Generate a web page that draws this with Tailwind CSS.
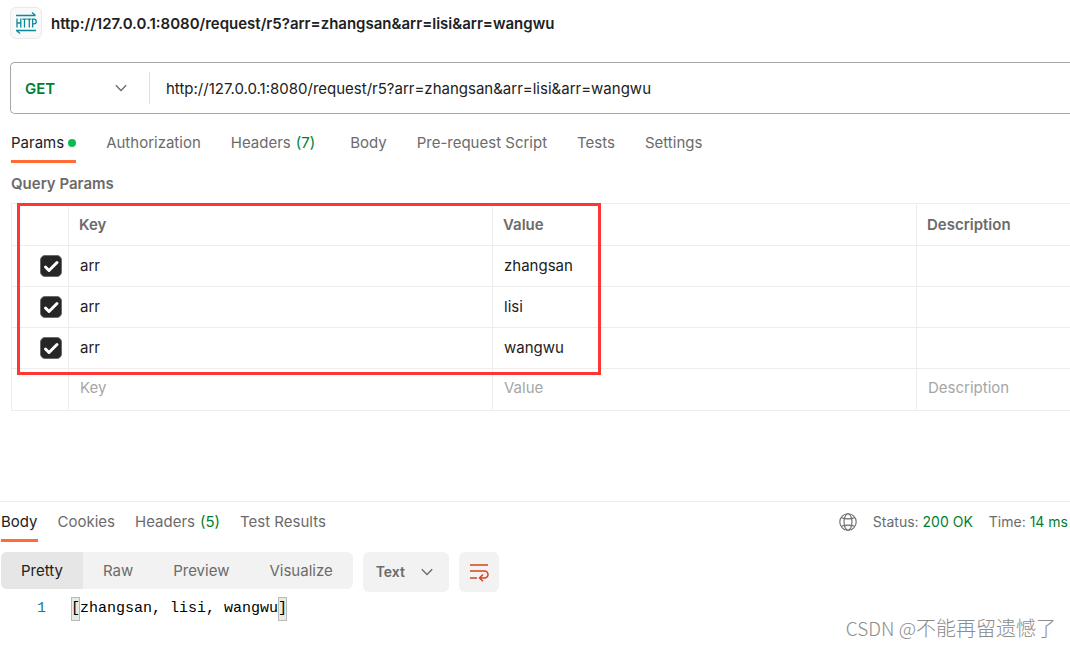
<!DOCTYPE html>
<html lang="en">
<head>
<meta charset="utf-8">
<meta name="viewport" content="width=device-width, initial-scale=1">
<title>API request</title>
<script src="https://cdn.jsdelivr.net/npm/@tailwindcss/browser@4"></script>
</head>
<body class="relative min-h-screen overflow-x-hidden bg-white font-['Inter','Liberation_Sans',sans-serif] text-[15px] leading-5 text-[#6b6b6b]">

<header class="flex items-center gap-[9px] pt-[7px] pl-[10px]">
  <span class="flex size-8 items-center justify-center rounded-md border border-[#e9e9e9] bg-[#f9f9f9]">
    <svg class="size-6" viewBox="0 0 24 24" fill="none" stroke="#0b8a99" stroke-width="1.3" aria-hidden="true">
      <path d="M2 4.500h19.500M18 1.500l3.500 3M2 19.500h20M2.500 19.500l3.500 3"/>
      <path d="M3 7.500v9M6.800 7.500v9M3 12h3.800M8.300 8.200h4.400M10.500 8.200v8.300M13.200 8.200h4.200M15.300 8.200v8.300M18.600 16.500v-8.300h1.400a2.100 2.100 0 0 1 0 4.600h-1.400"/>
    </svg>
  </span>
  <h1 class="pt-px font-semibold text-[#212121]">http://127.0.0.1:8080/request/r5?arr=zhangsan&amp;arr=lisi&amp;arr=wangwu</h1>
</header>

<main>
  <form class="mt-[23px] ml-[10px] flex h-[52px] items-center rounded-l-[5px] border border-r-0 border-[#a6a6a6]">
    <div class="relative flex h-8 w-[139px] items-center border-r border-[#e1e1e1]">
      <select aria-label="Method" class="h-full w-full appearance-none bg-transparent pt-px pl-[14px] font-semibold text-[#007f31] outline-none"><option>GET</option></select>
      <svg class="pointer-events-none absolute right-[22px] size-3" viewBox="0 0 12 12" fill="none" stroke="#6b6b6b" stroke-width="1.3" aria-hidden="true"><path d="M.8 3.300 6 8.500l5.200-5.200"/></svg>
    </div>
    <input aria-label="Request URL" class="h-full min-w-0 flex-1 pl-4 text-[#212121] outline-none" value="http://127.0.0.1:8080/request/r5?arr=zhangsan&amp;arr=lisi&amp;arr=wangwu">
  </form>

  <nav class="mt-4 ml-[11px] flex gap-[30px]" aria-label="Request sections">
    <button class="flex h-[33px] items-start border-b-3 border-[#ff6c37] pt-[3px] text-[#212121]"><span>Params</span><span class="mt-[6px] ml-1 size-2 rounded-full bg-[#0cbb52]"></span></button>
    <button class="flex h-[33px] items-start pt-[3px]">Authorization</button>
    <button class="mr-[5px] flex h-[33px] items-start gap-[5px] pt-[3px]">Headers <span class="text-[#007f31]">(7)</span></button>
    <button class="flex h-[33px] items-start pt-[3px]">Body</button>
    <button class="flex h-[33px] items-start pt-[3px]">Pre-request Script</button>
    <button class="flex h-[33px] items-start pt-[3px]">Tests</button>
    <button class="flex h-[33px] items-start pt-[3px]">Settings</button>
  </nav>

  <section>
    <h2 class="mt-[11px] ml-[11px] font-semibold">Query Params</h2>
    <div class="relative mt-[9px] pl-[11px]">
      <table class="w-full table-fixed border-separate border-spacing-0 border-t border-[#ededed] text-left [&_td]:border-b [&_td]:border-l [&_td]:border-[#ededed] [&_td]:p-0 [&_th]:border-b [&_th]:border-l [&_th]:border-[#ededed] [&_th]:py-0 [&_th]:font-semibold">
        <colgroup><col class="w-[57px]"><col class="w-[424px]"><col class="w-[424px]"><col></colgroup>
        <thead>
          <tr class="h-[42px]"><th aria-label="Enabled"></th><th class="pl-[10px]">Key</th><th class="pl-[10px]">Value</th><th class="pl-[10px]">Description</th></tr>
        </thead>
        <tbody class="text-[#212121]">
          <tr class="h-[41px]">
            <td><label class="relative ml-7 block size-[22px]"><input type="checkbox" checked aria-label="Enable arr zhangsan" class="block size-[22px] appearance-none rounded-[5px] border border-[#6b6b6b] bg-[#262626]"><svg class="pointer-events-none absolute inset-0 size-[22px]" viewBox="0 0 22 22" fill="none" stroke="#fff" stroke-width="3" stroke-linecap="round" stroke-linejoin="round" aria-hidden="true"><path d="M5.500 12l3.500 3.500 8-8"/></svg></label></td>
            <td><input aria-label="Key" class="h-5 w-full px-[11px] outline-none" value="arr"></td>
            <td><input aria-label="Value" class="h-5 w-full px-[11px] outline-none" value="zhangsan"></td>
            <td><input aria-label="Description" class="h-5 w-full px-[11px] outline-none"></td>
          </tr>
          <tr class="h-[41px]">
            <td><label class="relative ml-7 block size-[22px]"><input type="checkbox" checked aria-label="Enable arr lisi" class="block size-[22px] appearance-none rounded-[5px] border border-[#6b6b6b] bg-[#262626]"><svg class="pointer-events-none absolute inset-0 size-[22px]" viewBox="0 0 22 22" fill="none" stroke="#fff" stroke-width="3" stroke-linecap="round" stroke-linejoin="round" aria-hidden="true"><path d="M5.500 12l3.500 3.500 8-8"/></svg></label></td>
            <td><input aria-label="Key" class="h-5 w-full px-[11px] outline-none" value="arr"></td>
            <td><input aria-label="Value" class="h-5 w-full px-[11px] outline-none" value="lisi"></td>
            <td><input aria-label="Description" class="h-5 w-full px-[11px] outline-none"></td>
          </tr>
          <tr class="h-[41px]">
            <td><label class="relative ml-7 block size-[22px]"><input type="checkbox" checked aria-label="Enable arr wangwu" class="block size-[22px] appearance-none rounded-[5px] border border-[#6b6b6b] bg-[#262626]"><svg class="pointer-events-none absolute inset-0 size-[22px]" viewBox="0 0 22 22" fill="none" stroke="#fff" stroke-width="3" stroke-linecap="round" stroke-linejoin="round" aria-hidden="true"><path d="M5.500 12l3.500 3.500 8-8"/></svg></label></td>
            <td><input aria-label="Key" class="h-5 w-full px-[11px] outline-none" value="arr"></td>
            <td><input aria-label="Value" class="h-5 w-full px-[11px] outline-none" value="wangwu"></td>
            <td><input aria-label="Description" class="h-5 w-full px-[11px] outline-none"></td>
          </tr>
          <tr class="h-[42px]">
            <td></td>
            <td><input aria-label="New key" class="mb-1 h-5 w-full px-[11px] outline-none placeholder:text-[#a6a6a6]" placeholder="Key"></td>
            <td><input aria-label="New value" class="mb-1 h-5 w-full px-[11px] outline-none placeholder:text-[#a6a6a6]" placeholder="Value"></td>
            <td><input aria-label="New description" class="mb-1 h-5 w-full px-[11px] outline-none placeholder:text-[#a6a6a6]" placeholder="Description"></td>
          </tr>
        </tbody>
      </table>
      <div class="pointer-events-none absolute top-0 left-[17px] h-[172px] w-[584px] border-3 border-[#ff3636]"></div>
    </div>
  </section>
</main>

<section class="mt-[90px] border-t border-[#ededed]" aria-label="Response">
  <div class="flex items-start pt-[10px] pr-[2px] pl-px">
    <nav class="flex gap-5" aria-label="Response sections">
      <button class="flex h-[30px] items-start border-b-3 border-[#ff6c37] text-[#212121]">Body</button>
      <button class="flex h-[30px] items-start">Cookies</button>
      <button class="flex h-[30px] items-start gap-[5px]">Headers <span class="text-[#007f31]">(5)</span></button>
      <button class="flex h-[30px] items-start">Test Results</button>
    </nav>
    <div class="ml-auto flex items-center gap-4 text-sm leading-5">
      <svg class="size-[18px]" viewBox="0 0 18 18" fill="none" stroke="#6b6b6b" stroke-width="1.1" aria-hidden="true"><circle cx="9" cy="9" r="8.200"/><ellipse cx="9" cy="9" rx="4" ry="8.200"/><path d="M2.300 4.700c3.800 1.300 9.600 1.300 13.400 0M2.300 13.300c3.800-1.300 9.600-1.300 13.400 0"/></svg>
      <span>Status: <span class="text-[#007f31]">200 OK</span></span>
      <span>Time: <span class="text-[#007f31]">14 ms</span></span>
    </div>
  </div>

  <div class="mt-[10px] flex items-start gap-[10px] pl-px">
    <div class="flex h-[37px] overflow-hidden rounded-md bg-[#f2f2f2]">
      <button class="bg-[#e6e6e6] px-5 text-[#212121]">Pretty</button>
      <button class="px-5">Raw</button>
      <button class="px-5">Preview</button>
      <button class="px-5">Visualize</button>
    </div>
    <div class="relative flex h-10 w-[86px] items-center rounded-md bg-[#f2f2f2]">
      <select aria-label="Format" class="h-full w-full appearance-none bg-transparent pb-px pl-[13px] text-sm font-semibold outline-none"><option>Text</option></select>
      <svg class="pointer-events-none absolute right-4 size-3" viewBox="0 0 12 12" fill="none" stroke="#6b6b6b" stroke-width="1.3" aria-hidden="true"><path d="M.8 3.300 6 8.500l5.200-5.200"/></svg>
    </div>
    <button aria-label="Wrap lines" class="flex size-10 items-center justify-center rounded-md bg-[#f2f2f2]">
      <svg class="size-5" viewBox="0 0 20 20" fill="none" stroke="#d2451e" stroke-width="1.500" aria-hidden="true"><path d="M1 3h18M1 9h14.500a3.500 3.500 0 0 1 0 7H11M1 16h7M14 12.500 10.500 16l3.500 3.200"/></svg>
    </button>
  </div>

  <div class="mt-[5px] flex items-center font-['Liberation_Mono',monospace] leading-6">
    <span class="w-[46px] text-right text-[#237893]">1</span>
    <code class="ml-[25px] flex font-['Liberation_Mono',monospace] text-black"><span class="bg-[#e3ede3] outline -outline-offset-1 outline-[#b9b9b9]">[</span><span>zhangsan, lisi, wangwu</span><span class="bg-[#e3ede3] outline -outline-offset-1 outline-[#b9b9b9]">]</span></code>
  </div>
</section>

<p class="pointer-events-none absolute right-[14px] bottom-1 font-['Noto_Sans_CJK_SC',sans-serif] text-[20px] leading-[30px] font-light text-[#8c8c8c]"><span class="text-[19px]">CSDN @</span>不能再留遗憾了</p>
</body>
</html>
